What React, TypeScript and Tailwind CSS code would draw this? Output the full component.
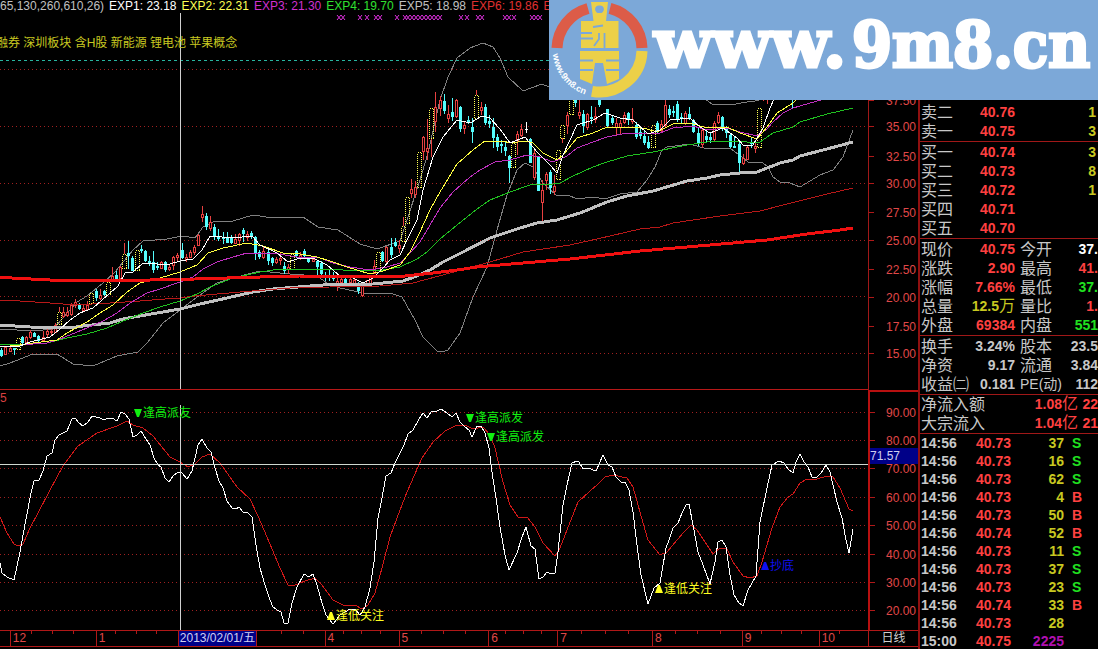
import React from "react";

type Kind = "r" | "c" | "y" | "w";
type Candle = [x: number, high: number, top: number, bottom: number, low: number, kind: Kind];

const candles: Candle[] = [
  [1, 348, 350, 356, 357, "c"], [5, 346, 347, 354, 354, "r"], [10, 346, 348, 351, 352, "r"], [14, 348, 348, 350, 355, "c"],
  [18, 336, 338, 349, 349, "y"], [22, 336, 337, 343, 344, "c"], [26, 336, 337, 342, 344, "r"], [30, 330, 332, 337, 339, "r"],
  [34, 332, 333, 337, 337, "c"], [38, 335, 336, 341, 342, "c"], [43, 331, 337, 340, 342, "r"], [47, 326, 331, 334, 337, "r"],
  [51, 328, 331, 332, 335, "r"], [55, 323, 325, 332, 333, "r"], [59, 307, 312, 324, 325, "y"], [63, 307, 312, 316, 318, "r"],
  [67, 307, 312, 315, 317, "r"], [71, 303, 305, 314, 316, "r"], [75, 299, 302, 305, 308, "r"], [79, 303, 305, 309, 310, "c"],
  [83, 304, 308, 310, 312, "r"], [87, 301, 305, 309, 311, "r"], [91, 291, 293, 303, 303, "y"], [96, 289, 291, 298, 301, "c"],
  [100, 289, 295, 298, 300, "r"], [104, 290, 291, 295, 296, "c"], [108, 280, 282, 294, 295, "y"], [112, 267, 276, 281, 282, "r"],
  [116, 271, 275, 279, 279, "c"], [120, 266, 267, 278, 279, "r"], [124, 243, 254, 268, 269, "y"], [128, 241, 253, 256, 269, "c"],
  [132, 256, 258, 271, 271, "c"], [137, 247, 250, 270, 271, "y"], [141, 245, 249, 251, 253, "c"], [145, 250, 251, 261, 262, "c"],
  [149, 256, 261, 264, 266, "c"], [153, 251, 262, 270, 273, "c"], [157, 262, 266, 268, 270, "c"], [161, 261, 262, 268, 269, "r"],
  [165, 261, 262, 270, 272, "c"], [169, 264, 267, 269, 271, "r"], [173, 256, 257, 265, 270, "r"], [177, 253, 255, 257, 261, "r"],
  [182, 243, 250, 258, 259, "c"], [186, 254, 257, 259, 262, "r"], [190, 250, 252, 257, 258, "r"], [194, 245, 247, 252, 255, "r"],
  [198, 234, 235, 245, 246, "r"], [202, 206, 214, 217, 222, "r"], [206, 213, 216, 227, 230, "c"], [210, 216, 222, 228, 231, "r"],
  [214, 224, 227, 236, 240, "c"], [218, 229, 237, 239, 241, "c"], [223, 232, 237, 239, 244, "c"], [227, 232, 237, 243, 243, "c"],
  [231, 235, 238, 243, 244, "c"], [235, 234, 239, 243, 244, "r"], [239, 233, 234, 240, 246, "r"], [243, 228, 230, 234, 242, "c"],
  [247, 231, 234, 237, 241, "r"], [251, 231, 233, 236, 239, "c"], [255, 236, 237, 253, 260, "c"], [259, 250, 252, 257, 259, "c"],
  [263, 246, 251, 257, 259, "r"], [268, 250, 252, 261, 265, "c"], [272, 257, 258, 263, 266, "c"], [276, 257, 259, 262, 264, "r"],
  [280, 253, 258, 260, 265, "r"], [284, 262, 266, 271, 274, "c"], [288, 264, 267, 269, 274, "r"], [292, 253, 254, 269, 269, "y"],
  [296, 250, 251, 256, 258, "c"], [300, 252, 255, 257, 260, "r"], [304, 249, 251, 256, 258, "c"], [308, 257, 258, 262, 263, "c"],
  [313, 256, 259, 261, 262, "r"], [317, 260, 261, 267, 276, "c"], [321, 261, 263, 274, 276, "c"], [325, 272, 275, 278, 281, "c"],
  [329, 270, 276, 278, 281, "c"], [333, 272, 277, 279, 281, "c"], [337, 278, 281, 285, 291, "r"], [341, 277, 279, 282, 286, "r"],
  [345, 277, 279, 284, 286, "c"], [350, 277, 279, 282, 285, "r"], [354, 277, 280, 284, 286, "r"], [358, 282, 283, 291, 294, "c"],
  [362, 284, 285, 295, 297, "r"], [366, 280, 283, 286, 287, "r"], [370, 276, 277, 284, 286, "r"], [374, 260, 266, 273, 274, "r"],
  [378, 251, 252, 270, 271, "y"], [382, 251, 252, 261, 262, "c"], [386, 246, 247, 261, 263, "r"], [391, 238, 247, 255, 258, "c"],
  [395, 238, 242, 246, 247, "c"], [399, 240, 245, 248, 253, "r"], [403, 217, 226, 241, 241, "y"], [407, 196, 197, 223, 224, "y"],
  [411, 179, 189, 193, 198, "r"], [415, 181, 187, 194, 198, "r"], [419, 151, 152, 187, 187, "y"], [423, 136, 137, 151, 160, "r"],
  [427, 119, 148, 151, 160, "r"], [431, 108, 108, 138, 157, "y"], [435, 92, 107, 121, 132, "r"], [440, 96, 100, 108, 116, "r"],
  [444, 94, 101, 111, 114, "c"], [448, 105, 114, 118, 123, "r"], [452, 98, 112, 117, 121, "c"], [456, 99, 100, 116, 118, "r"],
  [460, 106, 107, 129, 132, "c"], [464, 122, 125, 128, 134, "r"], [468, 116, 120, 122, 124, "c"], [472, 118, 127, 132, 143, "c"],
  [476, 90, 95, 118, 119, "y"], [481, 102, 107, 110, 115, "r"], [485, 104, 107, 123, 125, "c"], [489, 115, 121, 124, 128, "c"],
  [493, 118, 127, 138, 148, "c"], [497, 134, 137, 147, 151, "c"], [501, 140, 144, 146, 153, "c"], [505, 141, 147, 151, 156, "c"],
  [509, 155, 156, 168, 183, "c"], [513, 142, 143, 167, 168, "y"], [517, 131, 134, 140, 155, "r"], [521, 124, 129, 135, 137, "r"],
  [526, 122, 129, 130, 133, "w"], [530, 138, 139, 163, 163, "c"], [534, 149, 153, 177, 180, "r"], [538, 156, 157, 191, 191, "c"],
  [542, 180, 190, 202, 222, "r"], [546, 172, 174, 180, 190, "r"], [550, 170, 172, 188, 194, "c"], [554, 175, 186, 191, 195, "r"],
  [558, 149, 150, 179, 180, "y"], [562, 124, 125, 138, 143, "y"], [567, 112, 115, 125, 134, "r"], [571, 94, 95, 114, 115, "y"],
  [575, 93, 95, 103, 107, "c"], [579, 98, 112, 115, 119, "r"], [583, 110, 114, 126, 133, "c"], [587, 113, 114, 127, 130, "r"],
  [591, 106, 117, 119, 124, "c"], [595, 107, 116, 119, 123, "r"], [599, 94, 95, 105, 107, "c"], [607, 109, 109, 126, 128, "c"],
  [612, 115, 118, 123, 125, "c"], [616, 118, 123, 127, 136, "r"], [620, 120, 123, 127, 134, "r"], [624, 112, 115, 122, 124, "r"],
  [628, 112, 113, 120, 125, "c"], [632, 108, 119, 121, 124, "r"], [636, 122, 125, 137, 139, "c"], [640, 128, 132, 136, 139, "c"],
  [644, 131, 136, 143, 145, "c"], [648, 136, 142, 148, 149, "c"], [653, 124, 125, 147, 148, "y"], [657, 121, 123, 131, 133, "c"],
  [661, 120, 124, 130, 132, "r"], [665, 99, 105, 125, 127, "r"], [669, 105, 109, 115, 118, "c"], [673, 106, 111, 113, 117, "c"],
  [677, 101, 104, 120, 122, "c"], [681, 113, 117, 119, 124, "c"], [685, 111, 113, 123, 125, "r"], [689, 107, 114, 119, 120, "c"],
  [693, 119, 120, 132, 133, "c"], [698, 127, 133, 144, 146, "c"], [702, 129, 130, 144, 148, "r"], [706, 131, 136, 140, 143, "c"],
  [710, 133, 137, 140, 143, "c"], [714, 121, 123, 139, 142, "r"], [718, 112, 115, 122, 124, "r"], [722, 116, 117, 127, 131, "c"],
  [726, 126, 128, 133, 138, "c"], [730, 133, 135, 147, 148, "c"], [734, 136, 146, 148, 148, "c"], [739, 142, 144, 163, 172, "c"],
  [743, 154, 158, 163, 165, "r"], [747, 145, 147, 159, 160, "r"], [751, 137, 142, 144, 148, "c"], [755, 142, 146, 148, 153, "r"],
  [759, 107, 108, 147, 148, "y"], [763, 92, 94, 98, 101, "r"], [767, 90, 92, 97, 104, "r"], [792, 92, 93, 98, 108, "c"],
];

const palette: Record<Kind, string> = { r: "#e84040", c: "#54fcfc", y: "#ffff54", w: "#ffffff" };

const averages: { color: string; width: number; points: string }[] = [
  { color: "#808080", width: 1, points: "0,329 33,331 53,329 63,318 77,302 87,296 103,283 115,272 133,250 143,241 167,239 182,236 195,238 203,227 213,222 233,221 253,215 273,218 290,217 303,217 318,227 338,230 360,244 377,249 400,241 407,220 420,180 428,153 440,100 448,77 457,58 470,48 483,43 493,47 500,58 508,77 523,91 542,84 549,87 580,90 700,95 712,104 730,105 747,102 755,101 763,99" },
  { color: "#808080", width: 1, points: "0,366 10,363 33,354 57,354 73,364 93,366 117,356 138,352 147,343 163,323 180,310 200,295 217,283 233,278 260,271 290,274 317,276 327,283 340,288 363,293 393,294 402,297 415,320 423,337 437,351 442,352 448,350 460,333 473,297 487,267 497,230 507,195 517,170 525,163 533,167 543,183 557,196 567,195 578,199 593,197 605,199 620,194 637,192 647,180 655,167 662,150 667,147 690,144 707,149 730,148 743,158 748,162 763,163 768,167 773,177 780,182 790,183 800,187 820,175 833,170 843,157 853,130" },
  { color: "#c0c0c0", width: 3, points: "0,325 30,327 70,328 83,326 110,323 123,319 140,316 157,313 180,309 200,304 227,298 253,292 273,289 323,285 373,284 403,281 417,276 430,270 443,262 463,252 490,238 517,229 537,223 557,220 580,213 607,202 627,196 653,191 687,181 707,178 720,175 740,173 757,172 780,163 793,160 800,156 827,149 853,142" },
  { color: "#b81818", width: 1, points: "0,300 20,301 50,303 75,305 110,303 140,301 165,299 180,298 195,296 240,292 290,288 330,287 380,286 413,283 450,273 490,262 523,252 570,245 610,236 640,229 660,227 673,223 720,216 760,211 787,204 827,194 853,188" },
  { color: "#20c020", width: 1, points: "0,344 33,344 47,343 67,338 87,334 107,328 123,321 143,313 160,307 180,301 197,294 210,287 233,278 260,272 280,269 300,270 323,269 363,271 383,270 400,267 417,259 427,252 440,239 457,225 477,209 490,200 510,192 530,185 553,184 560,183 573,176 593,167 607,162 627,156 653,152 687,145 707,142 730,141 747,142 760,142 773,133 793,127 800,122 827,114 853,108" },
  { color: "#c030c0", width: 1, points: "0,347 20,345 47,343 60,339 87,328 103,321 117,313 130,303 147,293 160,289 180,282 193,277 203,269 217,262 233,257 247,253 273,253 297,257 320,258 333,263 350,267 370,270 387,267 400,263 410,253 420,242 430,225 440,208 453,192 470,177 480,170 495,162 510,160 527,155 540,157 553,162 567,156 577,148 593,142 607,137 627,133 660,133 673,128 693,126 707,130 727,128 740,132 757,136 767,129 773,122 783,113 793,108 800,106 817,101 853,92" },
  { color: "#ffff40", width: 1, points: "0,347 20,345 33,343 57,340 67,333 87,322 100,313 113,305 127,292 140,283 160,278 180,272 197,265 208,253 223,248 247,243 263,246 283,253 300,254 317,257 330,261 347,267 370,274 383,271 400,265 410,252 420,232 430,210 440,192 457,164 473,150 485,141 503,141 510,143 527,141 533,143 543,153 557,160 563,155 577,138 593,133 607,127 633,127 647,129 657,132 673,124 690,123 707,128 727,127 740,133 757,139 767,127 777,113 793,103 797,99" },
  { color: "#ffffff", width: 1, points: "0,347 20,346 30,342 50,337 60,329 70,320 80,313 93,308 110,293 118,286 125,273 133,272 143,263 157,264 170,264 180,261 193,259 202,250 210,236 233,238 252,236 260,245 277,253 288,262 300,258 313,258 327,265 340,276 353,278 363,283 373,278 383,268 390,260 400,255 407,240 417,220 423,190 433,157 443,137 457,120 470,123 482,116 490,118 500,129 510,143 525,137 537,152 550,165 557,173 563,155 577,125 593,120 605,113 620,118 633,120 648,134 660,130 670,120 690,118 700,127 710,133 723,128 737,138 743,145 753,145 763,128 770,108 774,99" },
  { color: "#f01010", width: 3, points: "0,277 12,278 50,280 150,280 195,279 260,277 300,276 405,276 433,273 457,270 477,267 523,263 570,259 640,251 687,247 767,240 807,234 840,230 853,228" },
];

const fastLine = "0,563 2,573 7,577 14,580 20,552 23,535 31,493 34,481 39,480 43,471 47,456 52,453 55,440 59,435 67,431 72,419 75,418 79,423 83,426 88,422 92,416 100,418 104,420 108,418 112,418 117,421 121,412 125,414 129,419 133,437 137,435 141,431 146,439 150,445 154,458 158,465 161,467 165,478 169,482 173,476 178,472 182,473 187,479 192,471 195,458 198,445 202,439 207,448 211,452 215,468 219,481 223,488 227,501 232,508 236,509 239,507 243,512 248,513 252,517 256,545 260,568 265,585 270,600 273,607 277,610 281,612 284,623 288,623 292,603 297,587 304,574 309,577 313,574 317,585 322,603 326,615 333,624 340,615 350,609 355,609 360,615 365,607 370,588 374,562 378,518 382,498 386,476 391,473 395,463 400,453 404,445 408,434 413,430 419,419 423,413 427,418 431,412 437,411 441,409 447,413 452,417 456,413 460,422 465,427 469,430 472,437 477,426 481,426 485,433 489,448 492,472 496,498 500,527 505,555 509,570 517,553 522,537 526,527 531,546 535,549 539,579 543,577 547,572 551,574 555,573 558,552 563,505 567,485 572,463 577,461 579,462 583,469 588,468 596,471 603,455 608,465 612,467 616,477 621,482 625,482 629,490 633,512 637,545 641,575 648,604 654,588 660,583 666,548 669,540 673,528 678,523 682,513 686,505 689,504 693,525 698,552 703,565 710,584 715,562 718,542 722,540 726,547 730,575 734,595 739,603 743,606 748,590 756,576 760,522 767,488 772,465 779,461 784,463 788,469 793,473 796,462 800,454 804,462 808,467 812,477 817,477 821,473 826,465 830,472 837,502 842,518 846,540 849,553 853,529";
const slowLine = "0,517 7,533 14,544 18,546 23,544 30,528 38,513 50,490 63,466 78,446 97,433 117,426 127,421 133,425 143,428 153,436 170,457 180,462 188,467 195,464 202,457 210,454 220,463 237,487 250,499 258,516 267,537 280,568 288,585 293,586 305,581 315,578 322,585 333,600 343,605 355,605 362,609 368,605 375,593 382,568 390,537 397,518 407,492 422,458 433,442 445,431 457,425 467,426 473,429 483,427 490,435 495,448 503,482 510,505 518,517 527,517 535,527 543,543 555,556 560,548 567,530 578,502 590,491 597,485 605,477 613,475 627,478 633,487 640,512 648,540 660,555 667,552 683,533 691,525 697,530 705,542 713,554 720,548 727,549 733,562 743,576 750,578 757,576 762,562 772,528 780,507 788,497 793,494 800,483 807,479 817,479 827,476 833,477 840,488 849,509 853,511";

const markXs = [337, 341, 358, 365, 374, 378, 395, 403, 406, 410, 414, 418, 422, 426, 430, 434, 438, 459, 465, 476, 480, 503, 507, 512, 530, 534, 538];

const priceScale: [string, number][] = [
  ["37.50", 100], ["35.00", 126], ["32.50", 156], ["30.00", 183], ["27.50", 212],
  ["25.00", 240], ["22.50", 269], ["20.00", 297], ["17.50", 326], ["15.00", 353],
];
const rangeScale: [string, number][] = [
  ["90.00", 412], ["80.00", 440], ["70.00", 468], ["60.00", 497],
  ["50.00", 525], ["40.00", 554], ["30.00", 582], ["20.00", 610],
];

const months: [string, number][] = [
  ["", 10], ["12", 86], ["1", 82], ["date", 79], ["", 68], ["4", 74], ["5", 90],
  ["6", 69], ["7", 95], ["8", 90], ["9", 77], ["10", 49],
];

const averagesLegend: [string, string][] = [
  ["EXP1: 23.18", "text-white"], ["EXP2: 22.31", "text-[#ffff54]"], ["EXP3: 21.30", "text-[#d030d0]"],
  ["EXP4: 19.70", "text-[#30e030]"], ["EXP5: 18.98", "text-[#c0c0c0]"], ["EXP6: 19.86", "text-[#e03030]"],
  ["E", "text-[#e03030]"],
];

const signals: [string, string, string][] = [
  ["▼", "逢高派友", "left-[134px] top-[15px] text-[#10f010]"],
  ["▼", "逢高派发", "left-[466px] top-[20px] text-[#10f010]"],
  ["▼", "逢高派发", "left-[487px] top-[39px] text-[#10f010]"],
  ["▲", "逢低关注", "left-[327px] top-[218px] text-[#ffff20]"],
  ["▲", "逢低关注", "left-[655px] top-[191px] text-[#ffff20]"],
  ["▲", "抄底", "left-[761px] top-[168px] text-[#1010f0]"],
];

const RED = "text-[#ff4040]";
const GREEN = "text-[#20e020]";
const GRAY = "text-[#c8c8c8]";
const YELLOW = "text-[#c8c820]";

const asks: [string, string, string][] = [["卖二", "40.76", "1"], ["卖一", "40.75", "3"]];
const bids: [string, string, string][] = [
  ["买一", "40.74", "3"], ["买二", "40.73", "8"], ["买三", "40.72", "1"], ["买四", "40.71", ""], ["买五", "40.70", ""],
];
type Stat = [string, string, string, string, string, string];
const dayStats: Stat[] = [
  ["现价", "40.75", RED, "今开", "37.", "text-white"],
  ["涨跌", "2.90", RED, "最高", "41.", RED],
  ["涨幅", "7.66%", RED, "最低", "37.", GREEN],
  ["总量", "12.5万", YELLOW, "量比", "1.", RED],
  ["外盘", "69384", RED, "内盘", "551", GREEN],
];
const shareStats: Stat[] = [
  ["换手", "3.24%", GRAY, "股本", "23.5", GRAY],
  ["净资", "9.17", GRAY, "流通", "3.84", GRAY],
  ["收益㈡", "0.181", GRAY, "PE(动)", "112", GRAY],
];
const trades: [string, string, string, string][] = [
  ["14:56", "40.73", "37", "S"], ["14:56", "40.73", "16", "S"], ["14:56", "40.73", "62", "S"], ["14:56", "40.73", "4", "B"],
  ["14:56", "40.73", "50", "B"], ["14:56", "40.74", "52", "B"], ["14:56", "40.73", "11", "S"], ["14:56", "40.73", "37", "S"],
  ["14:56", "40.73", "23", "S"], ["14:56", "40.74", "33", "B"], ["14:56", "40.73", "28", ""], ["15:00", "40.75", "2225", ""],
];

function GridLines({ ys }: { ys: number[] }) {
  return (
    <>
      {ys.map((y) => (
        <line key={y} x1="0" x2="868" y1={y + 0.5} y2={y + 0.5} stroke="#a02020" strokeDasharray="1 3" />
      ))}
    </>
  );
}

function CandleShape({ c: [x, high, top, bottom, low, kind] }: { c: Candle }) {
  const color = palette[kind];
  const h = Math.max(1, bottom - top);
  const cx = x + 0.5;
  if (kind === "y") {
    return (
      <g stroke={color} fill="none">
        {high < top - 3 && <line x1={cx} x2={cx} y1={high} y2={top} stroke={palette.r} />}
        {low > bottom + 3 && <line x1={cx} x2={cx} y1={bottom} y2={low} stroke={palette.r} />}
        <rect x={x - 1.5} y={top + 0.5} width="4" height={h} strokeDasharray="1 1" />
      </g>
    );
  }
  if (kind === "r") {
    return (
      <g stroke={color} fill="#000">
        <line x1={cx} x2={cx} y1={high} y2={low} />
        <rect x={x - 0.5} y={top + 0.5} width="2" height={h} />
      </g>
    );
  }
  return (
    <g stroke={color} fill={color}>
      <line x1={cx} x2={cx} y1={high} y2={low} />
      <rect x={x - 1} y={top} width="3" height={h} stroke="none" />
    </g>
  );
}

function PriceChart() {
  return (
    <svg className="block h-full w-full" viewBox="0 0 868 390" preserveAspectRatio="none" shapeRendering="crispEdges" aria-label="日线走势">
      <GridLines ys={[69, 126, 183, 240, 296, 353]} />
      <line x1="0" x2="868" y1="60.5" y2="60.5" stroke="#28b4a0" strokeDasharray="3 3" />
      <path d={markXs.map((x) => `M${x} 15l4 5M${x + 4} 15l-4 5`).join("")} stroke="#e030e0" fill="none" shapeRendering="auto" />
      {averages.slice(0, 2).map((a, i) => (
        <polyline key={i} points={a.points} stroke={a.color} strokeWidth={a.width} fill="none" />
      ))}
      {candles.map((c) => (
        <CandleShape key={c[0]} c={c} />
      ))}
      {averages.slice(2).map((a, i) => (
        <polyline key={i} points={a.points} stroke={a.color} strokeWidth={a.width} fill="none" />
      ))}
      <line x1="180.5" x2="180.5" y1="13" y2="389" stroke="#d0d0d0" />
      <line x1="0" x2="868" y1="389.5" y2="389.5" stroke="#b81818" />
    </svg>
  );
}

function RangeChart() {
  return (
    <svg className="block h-full w-full" viewBox="0 390 868 240" preserveAspectRatio="none" shapeRendering="crispEdges" aria-label="指标走势">
      <GridLines ys={rangeScale.map(([, y]) => y)} />
      <polyline points={slowLine} stroke="#d01818" fill="none" />
      <polyline points={fastLine} stroke="#ffffff" fill="none" />
      <line x1="0" x2="868" y1="464.5" y2="464.5" stroke="#d0d8d0" />
      <line x1="180.5" x2="180.5" y1="405" y2="630" stroke="#d0d0d0" />
    </svg>
  );
}

function Scale({ items, origin, width, height }: { items: [string, number][]; origin: number; width: number; height: number }) {
  return (
    <svg className="block h-full w-full" viewBox={`0 ${origin} ${width} ${height}`} fontFamily="Liberation Sans" fontSize="12">
      {items.map(([label, y]) => (
        <g key={label}>
          <line x1="0" x2="5" y1={y + 0.5} y2={y + 0.5} stroke="#b01818" />
          <text x={width - 2} y={y + 5} textAnchor="end" fill="#e04848">{label}</text>
        </g>
      ))}
    </svg>
  );
}

function Timeline() {
  return (
    <div className="relative flex h-[17px] border-y border-[#b01818]">
      <svg className="absolute inset-0 h-full w-full" viewBox="0 0 868 15" preserveAspectRatio="none" aria-hidden="true">
        <path
          d={[31, 52, 73, 115, 136, 156, 281, 303, 343, 361, 380, 421, 443, 465, 505, 523, 541, 581, 605, 628, 675, 697, 720, 761, 781, 801, 839]
            .map((x) => `M${x}.5 0v3`)
            .join("")}
          stroke="#b01818"
        />
      </svg>
      {months.map(([label, span], i) => (
        <div
          key={i}
          className="min-w-0 basis-0 border-r border-[#b01818] text-xs leading-[15px] text-[#e04848] last:border-r-0"
          style={{ flexGrow: span }}
        >
          {label === "date" ? (
            <span className="block whitespace-nowrap bg-[#000088] text-center text-[#d0d0f0]">2013/02/01/五</span>
          ) : (
            <span className="pl-[2px]">{label}</span>
          )}
        </div>
      ))}
    </div>
  );
}

function OrderRows({ rows }: { rows: [string, string, string][] }) {
  return (
    <table className="w-full table-fixed">
      <tbody>
        {rows.map(([label, price, volume]) => (
          <tr key={label} className="h-[19px]">
            <th scope="row" className="w-[50px] text-left text-base leading-[19px] font-normal text-[#c8c8c8]">{label}</th>
            <td className={`w-[44px] text-right ${RED}`}>{price}</td>
            <td className={`pr-[2px] text-right ${YELLOW}`}>{volume}</td>
          </tr>
        ))}
      </tbody>
    </table>
  );
}

function StatRows({ rows }: { rows: Stat[] }) {
  return (
    <table className="w-full table-fixed">
      <tbody>
        {rows.map(([a, av, ac, b, bv, bc]) => (
          <tr key={a} className="h-[19px] whitespace-nowrap">
            <th scope="row" className="w-[50px] text-left text-base leading-[19px] font-normal text-[#c8c8c8]">{a}</th>
            <td className={`w-[44px] text-right ${ac}`}>
              {av.replace("万", "")}
              {av.endsWith("万") && <span className="text-base leading-none font-normal">万</span>}
            </td>
            <th scope="row" className={`w-[49px] pl-[5px] text-left leading-[19px] font-normal text-[#c8c8c8] ${b.startsWith("PE") ? "text-sm" : "text-base"}`}>{b}</th>
            <td className={`text-right ${bc}`}>{bv}</td>
          </tr>
        ))}
      </tbody>
    </table>
  );
}

function QuotePanel() {
  return (
    <aside className="w-[180px] shrink-0 border-l-2 border-[#901010] pt-[103px] text-sm leading-[19px] font-bold">
      <section className="pl-px"><OrderRows rows={asks} /></section>
      <section className="border-t border-[#a01818] pt-px pl-px"><OrderRows rows={bids} /></section>
      <section className="border-t border-[#a01818] pt-px pl-px"><StatRows rows={dayStats} /></section>
      <section className="border-t border-[#a01818] pt-px pl-px"><StatRows rows={shareStats} /></section>
      <section className="border-t border-[#a01818] pl-px">
        <table className="w-full table-fixed">
          <tbody>
            {[["净流入额", "1.08", "22"], ["大宗流入", "1.04", "21"]].map(([label, amount, rest]) => (
              <tr key={label} className="h-[19px] whitespace-nowrap">
                <th scope="row" className="w-[80px] text-left text-base leading-[19px] font-normal text-[#c8c8c8]">{label}</th>
                <td className={`w-[77px] text-right ${RED}`}>{amount}<span className="text-base leading-none font-normal">亿</span></td>
                <td className={`text-right ${RED}`}>{rest}</td>
              </tr>
            ))}
          </tbody>
        </table>
      </section>
      <section className="border-t border-[#a01818] pl-px">
        <table className="w-full table-fixed">
          <tbody>
            {trades.map(([time, price, volume, side], i) => (
              <tr key={i} className="h-[18px] leading-[18px]">
                <td className={`w-[50px] ${GRAY}`}>{time}</td>
                <td className={`w-[40px] text-right ${RED}`}>{price}</td>
                <td className={`w-[53px] text-right ${volume === "2225" ? "text-[#b010b0]" : YELLOW}`}>{volume}</td>
                <td className={`pl-2 ${side === "S" ? GREEN : RED}`}>{side}</td>
              </tr>
            ))}
          </tbody>
        </table>
      </section>
    </aside>
  );
}

function Banner() {
  return (
    <a href="#home" aria-label="www.9m8.cn" className="absolute top-0 right-0 block h-[100px] w-[549px] bg-[#7ca8d8]">
      <svg className="block h-full w-full" viewBox="0 0 549 100">
        <g fill="none" strokeWidth="11">
          <path d="M8 48A42.5 42.5 0 0 1 39 8.5" stroke="#dc5c48" />
          <path d="M61 8.3A42.5 42.5 0 0 1 93 48" stroke="#dc5c48" />
          <path d="M93 51A42.5 42.5 0 0 1 43 91.3" stroke="#ecd048" />
        </g>
        <path
          fill="#ecd048"
          fillRule="evenodd"
          d="M42 2H59L57 21H69.5V48H32V21H44.5ZM50.5 5.5A3.8 3.8 0 1 0 50.5 13A3.8 3.8 0 1 0 50.5 5.5ZM31 51H70V79L58 84L54 63H46L43 84L31 79Z"
        />
        <path
          stroke="#7ca8d8"
          strokeWidth="1.8"
          fill="none"
          d="M31 33H43M31 38.5H44M44 27L54 25.5M55.5 33V48M50 33V39L45 46M31 60.5H44M57 60.5H70M31 70H44M57 70H70"
        />
        <path id="ring-text" d="M4 54A47 47 0 0 0 42 96" fill="none" />
        <text fontFamily="Liberation Sans" fontWeight="bold" fontSize="9" fill="#fff">
          <textPath href="#ring-text">www.9m8.cn</textPath>
        </text>
        <text y="67" fontWeight="bold" fill="#fff" stroke="#fff" strokeWidth="3">
          <tspan x="105" fontFamily="DejaVu Serif" fontSize="68">www.</tspan>
          <tspan x="303" fontFamily="DejaVu Serif Condensed, DejaVu Serif" fontSize="64">9m8.cn</tspan>
        </text>
      </svg>
    </a>
  );
}

export default function App() {
  return (
    <main className="relative flex h-screen overflow-hidden bg-black font-['Liberation_Sans','Noto_Sans_CJK_SC',sans-serif]">
      <div className="flex min-w-0 flex-1 flex-col">
        <section className="flex h-[390px] shrink-0">
          <div className="relative min-w-0 flex-1 overflow-hidden">
            <PriceChart />
            <div className="absolute top-0 left-0 flex gap-[5px] text-xs leading-[13px] whitespace-nowrap">
              <span className="text-[#c0c0c0]">65,130,260,610,26)</span>
              {averagesLegend.map(([text, tone]) => (
                <span key={text} className={tone}>{text}</span>
              ))}
            </div>
            <p className="absolute top-[35px] -left-1 text-xs leading-4 whitespace-nowrap text-[#c8c820]">
              融券 深圳板块 含H股 新能源 锂电池 苹果概念
            </p>
          </div>
          <div className="w-[50px] border-l border-[#a01818]">
            <Scale items={priceScale} origin={0} width={49} height={390} />
          </div>
        </section>
        <section className="flex h-[240px] shrink-0">
          <div className="relative min-w-0 flex-1 overflow-hidden">
            <RangeChart />
            <span className="absolute top-0 left-0 text-xs leading-4 text-[#d84040]">5</span>
            {signals.map(([mark, text, tone], i) => (
              <span key={i} className={`absolute flex items-center text-xs leading-4 whitespace-nowrap ${tone}`}>
                <svg className="mr-px h-2 w-2" viewBox="0 0 8 8" aria-hidden="true">
                  <path d={mark === "▼" ? "M0 0H8L5 8H3Z" : "M3 0H5L8 8H0Z"} fill="currentColor" />
                </svg>
                {text}
              </span>
            ))}
          </div>
          <div className="relative w-[50px] border-2 border-r-0 border-b-0 border-[#b81010]">
            <Scale items={rangeScale} origin={392} width={48} height={238} />
            <span className="absolute top-[56px] right-0 left-0 bg-[#000088] text-xs leading-4 text-[#d0d0f0]">71.57</span>
          </div>
        </section>
        <footer className="flex">
          <div className="min-w-0 flex-1"><Timeline /></div>
          <div className="h-[17px] w-[50px] border border-r-0 border-[#b01818] text-center text-xs leading-[15px] text-[#d0d0d0]">日线</div>
        </footer>
      </div>
      <QuotePanel />
      <Banner />
    </main>
  );
}
